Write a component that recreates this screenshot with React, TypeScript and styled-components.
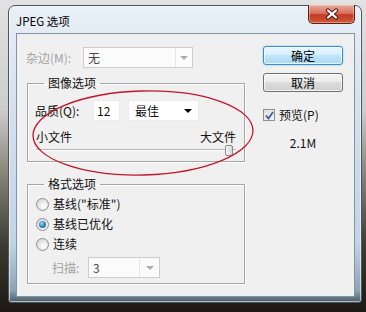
import React from 'react';
import styled, { createGlobalStyle } from 'styled-components';

const Global = createGlobalStyle`
  html, body { margin: 0; padding: 0; }
  body {
    width: 366px;
    height: 312px;
    overflow: hidden;
    font-family: "Noto Sans CJK SC", "Liberation Sans", sans-serif;
    font-size: 12px;
    color: #111;
  }
`;

const Desktop = styled.div`
  position: relative;
  width: 366px;
  height: 312px;
  box-sizing: border-box;
  padding: 5px 4px 0 8px;
  background: linear-gradient(
    to bottom,
    #e2e2e2 0px,
    #cdcdcd 110px,
    #8d887c 170px,
    #3d3b32 245px,
    #231f18 300px,
    #1c1812 312px
  );
`;

const Window = styled.div`
  width: 354px;
  height: 298px;
  box-sizing: border-box;
  border: 1px solid #4a5561;
  border-radius: 7px 7px 3px 3px;
  padding: 0 6px 5px 7px;
  display: flex;
  flex-direction: column;
  background: linear-gradient(
    to bottom,
    #e9f0f7 0%,
    #d6e2ee 30%,
    #c3d4e4 80%,
    #8ea3b4 96%,
    #4c5d69 100%
  );
  box-shadow: inset 0 0 0 1px rgba(255, 255, 255, 0.55);
`;

const TitleBar = styled.div`
  height: 27px;
  display: flex;
  align-items: flex-start;
`;

const Title = styled.div`
  margin-top: 7px;
  font-size: 11.5px;
  line-height: 16px;
  color: #000;
`;

const CloseButton = styled.div`
  margin-left: auto;
  margin-top: -1px;
  width: 47px;
  height: 19px;
  box-sizing: border-box;
  border: 1px solid #5e1d13;
  border-top: none;
  border-radius: 0 0 5px 5px;
  display: flex;
  align-items: center;
  justify-content: center;
  background: linear-gradient(
    to bottom,
    #e9a99a 0%,
    #d9725e 45%,
    #c23c24 55%,
    #cf5a3c 100%
  );
  box-shadow: inset 0 0 0 1px rgba(255, 220, 210, 0.45);
`;

const Client = styled.div`
  flex: 1;
  background: #f0f0f0;
  border: 1px solid #8193a5;
  display: grid;
  grid-template-columns: 218px 80px;
  column-gap: 18px;
  align-items: start;
  padding: 12px 11px 0 10px;
`;

const LeftColumn = styled.div`
  display: flex;
  flex-direction: column;
  padding-top: 1px;
`;

const RightColumn = styled.div`
  display: flex;
  flex-direction: column;
`;

const FieldRow = styled.div<{ $indent?: number }>`
  display: flex;
  align-items: center;
  height: 21px;
  margin-left: ${(p) => p.$indent ?? 0}px;
`;

const Label = styled.span<{ $width: number; $disabled?: boolean }>`
  width: ${(p) => p.$width}px;
  flex: none;
  line-height: 16px;
  color: ${(p) => (p.$disabled ? '#a3a3a3' : '#111')};
`;

const Combo = styled.div<{ $width: number; $disabled?: boolean; $arrow: number }>`
  width: ${(p) => p.$width}px;
  height: 21px;
  box-sizing: border-box;
  display: flex;
  align-items: stretch;
  background: ${(p) => (p.$disabled ? '#fbfbfb' : '#ffffff')};
  border: 1px solid ${(p) => (p.$disabled ? '#cdcdcd' : '#ececec')};
  color: ${(p) => (p.$disabled ? '#4a4a4a' : '#111')};

  & > span:first-child {
    flex: 1;
    padding-left: ${(p) => (p.$disabled ? 4 : 6)}px;
    line-height: 19px;
  }
  & > span:last-child {
    width: ${(p) => p.$arrow}px;
    display: flex;
    align-items: center;
    justify-content: center;
    border-left: 1px solid ${(p) => (p.$disabled ? '#e6e6e6' : 'transparent')};
  }
`;

const Arrow = styled.i<{ $disabled?: boolean }>`
  width: 0;
  height: 0;
  border-left: 4px solid transparent;
  border-right: 4px solid transparent;
  border-top: 4px solid ${(p) => (p.$disabled ? '#ababab' : '#000')};
`;

const NumberInput = styled.div`
  width: 27px;
  height: 21px;
  box-sizing: border-box;
  margin-right: 8px;
  background: #fff;
  border: 1px solid #ededed;
  padding-left: 3px;
  line-height: 19px;
`;

const Group = styled.fieldset`
  margin: 0;
  min-width: 0;
  width: 218px;
  box-sizing: border-box;
  border: 1px solid #a6a6a6;
  box-shadow: inset 1px 1px 0 #ffffff, 1px 1px 0 #ffffff;
  padding: 0 8px;
`;

const GroupTitle = styled.legend`
  margin-left: 8px;
  padding: 0 4px;
  line-height: 16px;
  color: #111;
`;

const QualityGroup = styled(Group)`
  margin-top: 7px;
  padding-top: 9px;
  padding-bottom: 5px;
`;

const FormatGroup = styled(Group)`
  margin-top: 14px;
  padding-top: 2px;
  padding-bottom: 5px;
`;

const SizeScale = styled.div`
  margin-top: 8px;
  display: flex;
  justify-content: space-between;
  line-height: 16px;
`;

const SliderTrack = styled.div`
  height: 11px;
  display: flex;
  justify-content: flex-end;
  padding-right: 3px;
  background: linear-gradient(
    to bottom,
    transparent 4px,
    #b7b7b7 4px,
    #b7b7b7 5px,
    #ffffff 5px,
    #ffffff 6px,
    transparent 6px
  );
`;

const SliderThumb = styled.div`
  width: 8px;
  height: 11px;
  box-sizing: border-box;
  border: 1px solid #8a8a8a;
  border-radius: 2px;
  background: linear-gradient(to right, #f6f6f6, #d4d4d4);
`;

const OptionRow = styled.div`
  height: 20px;
  display: flex;
  align-items: center;
  gap: 4px;
  line-height: 16px;
`;

const Radio = styled.span<{ $checked?: boolean }>`
  width: 13px;
  height: 13px;
  box-sizing: border-box;
  border-radius: 50%;
  border: 1px solid #8e8f8f;
  display: flex;
  align-items: center;
  justify-content: center;
  background: radial-gradient(circle at 60% 65%, #ffffff 0%, #e9e9e9 45%, #cfcfcf 100%);

  &::after {
    content: '';
    display: ${(p) => (p.$checked ? 'block' : 'none')};
    width: 7px;
    height: 7px;
    border-radius: 50%;
    background: radial-gradient(circle at 40% 35%, #a6dcf8 0%, #3c8ec4 45%, #17476f 100%);
  }
`;

const ScanRow = styled(FieldRow)`
  margin-top: 3px;
`;

const Button = styled.div<{ $default?: boolean }>`
  height: 19px;
  box-sizing: border-box;
  border-radius: 3px;
  display: flex;
  align-items: center;
  justify-content: center;
  color: #000;
  border: 1px solid ${(p) => (p.$default ? '#3c8fc4' : '#707070')};
  background: ${(p) =>
    p.$default
      ? 'linear-gradient(to bottom, #e8f6fd 0%, #d6effc 50%, #bfe5fa 50%, #a9daf5 100%)'
      : 'linear-gradient(to bottom, #f4f4f4 0%, #ebebeb 50%, #dcdcdc 50%, #d0d0d0 100%)'};
  box-shadow: ${(p) =>
    p.$default
      ? 'inset 0 0 0 1px rgba(255,255,255,0.7), 0 0 2px #6cc3f0'
      : 'inset 0 0 0 1px rgba(255,255,255,0.7)'};
  margin-top: ${(p) => (p.$default ? 0 : 8)}px;
`;

const CheckRow = styled.div`
  margin-top: 15px;
  display: flex;
  align-items: center;
  gap: 4px;
  line-height: 16px;
`;

const CheckBox = styled.span`
  width: 12px;
  height: 12px;
  box-sizing: border-box;
  border: 1px solid #8e8f8f;
  background: linear-gradient(135deg, #dedede 0%, #f6f6f6 100%);
  display: flex;
  align-items: center;
  justify-content: center;
`;

const FileSize = styled.div`
  margin-top: 12px;
  text-align: center;
  line-height: 16px;
`;

const Annotation = styled.svg`
  position: absolute;
  left: 0;
  top: 0;
  pointer-events: none;
`;

export default function App() {
  return (
    <>
      <Global />
      <Desktop>
        <Window>
          <TitleBar>
            <Title>JPEG 选项</Title>
            <CloseButton>
              <svg width="16" height="12" viewBox="0 0 16 12">
                <path d="M4 2.5 L12 9.5 M12 2.5 L4 9.5" stroke="#4a1a12" strokeWidth="4.2" strokeLinecap="round" />
                <path d="M4 2.5 L12 9.5 M12 2.5 L4 9.5" stroke="#ffffff" strokeWidth="2.3" strokeLinecap="round" />
              </svg>
            </CloseButton>
          </TitleBar>
          <Client>
            <LeftColumn>
              <FieldRow $indent={-1}>
                <Label $width={57} $disabled>杂边(M):</Label>
                <Combo $width={110} $arrow={16} $disabled>
                  <span>无</span>
                  <span><Arrow $disabled /></span>
                </Combo>
              </FieldRow>

              <QualityGroup>
                <GroupTitle>图像选项</GroupTitle>
                <FieldRow $indent={-1}>
                  <Label $width={58}>品质(Q):</Label>
                  <NumberInput>12</NumberInput>
                  <Combo $width={71} $arrow={20}>
                    <span>最佳</span>
                    <span><Arrow /></span>
                  </Combo>
                </FieldRow>
                <SizeScale>
                  <span>小文件</span>
                  <span>大文件</span>
                </SizeScale>
                <SliderTrack>
                  <SliderThumb />
                </SliderTrack>
              </QualityGroup>

              <FormatGroup>
                <GroupTitle>格式选项</GroupTitle>
                <OptionRow>
                  <Radio />
                  <span>基线("标准")</span>
                </OptionRow>
                <OptionRow>
                  <Radio $checked />
                  <span>基线已优化</span>
                </OptionRow>
                <OptionRow>
                  <Radio />
                  <span>连续</span>
                </OptionRow>
                <ScanRow $indent={16}>
                  <Label $width={36} $disabled>扫描:</Label>
                  <Combo $width={72} $arrow={19} $disabled>
                    <span>3</span>
                    <span><Arrow $disabled /></span>
                  </Combo>
                </ScanRow>
              </FormatGroup>
            </LeftColumn>

            <RightColumn>
              <Button $default>确定</Button>
              <Button>取消</Button>
              <CheckRow>
                <CheckBox>
                  <svg width="9" height="9" viewBox="0 0 9 9">
                    <path d="M1 4.5 L3.5 7.5 L8 1" fill="none" stroke="#3e5a9a" strokeWidth="1.8" />
                  </svg>
                </CheckBox>
                <span>预览(P)</span>
              </CheckRow>
              <FileSize>2.1M</FileSize>
            </RightColumn>
          </Client>
        </Window>
        <Annotation width="366" height="312" viewBox="0 0 366 312">
          <ellipse
            cx="143"
            cy="133"
            rx="110"
            ry="42"
            transform="rotate(-1.5 143 133)"
            fill="none"
            stroke="#c4162a"
            strokeWidth="1.3"
          />
        </Annotation>
      </Desktop>
    </>
  );
}
